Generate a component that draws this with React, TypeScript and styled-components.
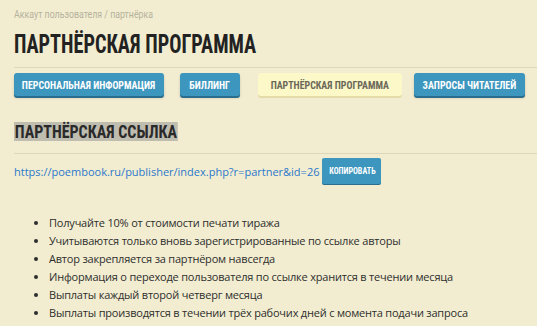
import React from "react";
import styled, { createGlobalStyle } from "styled-components";

const Global = createGlobalStyle`
  html, body { margin: 0; padding: 0; background: #f2edd0; overflow: hidden; }
  body { font-family: "Open Sans", "DejaVu Sans", sans-serif; }
`;

const Cond = `"Roboto Condensed", "Roboto", sans-serif`;

const Page = styled.div`
  width: 537px;
  height: 326px;
  padding: 8px 0 0 14px;
  box-sizing: border-box;
  background: #f2edd0;
`;

const Squeeze = styled.span<{ $k: number; $origin?: string }>`
  display: inline-block;
  white-space: nowrap;
  transform: scaleX(${(p) => p.$k});
  transform-origin: ${(p) => p.$origin || "left center"};
`;

const Breadcrumb = styled.div`
  font-family: "Roboto", sans-serif;
  font-size: 10px;
  line-height: 14px;
  color: #b5b29e;
`;

const Title = styled.h1`
  margin: 8px 0 0;
  font-family: ${Cond};
  font-weight: bold;
  font-size: 25px;
  line-height: 30px;
  color: #222;
`;

const Rule = styled.div<{ $top: number }>`
  margin-top: ${(p) => p.$top}px;
  height: 1px;
  background: #dcd7bb;
`;

const Tabs = styled.div`
  display: flex;
  margin-top: 5px;
`;

const Tab = styled.div<{ $active?: boolean; $w: number; $ml: number }>`
  width: ${(p) => p.$w}px;
  margin-left: ${(p) => p.$ml}px;
  height: 23px;
  box-sizing: border-box;
  display: flex;
  align-items: center;
  justify-content: center;
  border-radius: 3px;
  font-family: ${Cond};
  font-weight: bold;
  font-size: 11.5px;
  white-space: nowrap;
  color: ${(p) => (p.$active ? "#6b685a" : "#fff")};
  background: ${(p) => (p.$active ? "#fcf8c8" : "#3d96be")};
  box-shadow: ${(p) =>
    p.$active ? "0 2px 0 #e3dca8" : "0 2px 0 #2b6d8c, 0 2px 3px rgba(0,0,0,0.15)"};
`;

const SectionTitle = styled.h2`
  margin: 26px 0 0;
  font-family: ${Cond};
  font-weight: bold;
  font-size: 19px;
  line-height: 19px;
  color: #2a2a2a;
`;

const Highlight = styled(Squeeze)`
  background: #bfbdb0;
  padding: 0 1px;
`;

const LinkRow = styled.div`
  display: flex;
  align-items: center;
  margin-top: 4px;
  gap: 3px;
`;

const Link = styled.a`
  font-size: 11px;
  color: #2b78cc;
  text-decoration: none;
`;

const CopyButton = styled.button`
  width: 59px;
  height: 26px;
  padding: 0;
  border: none;
  border-radius: 2px;
  background: #3d96be;
  color: #fff;
  font-family: ${Cond};
  font-weight: bold;
  font-size: 8.5px;
  box-shadow: 0 1px 0 #2b6d8c;
`;

const List = styled.ul`
  margin: 30px 0 0;
  padding: 0 0 0 35px;
  font-size: 11px;
  letter-spacing: -0.2px;
  line-height: 18px;
  color: #2e2e2e;
`;

const Item = styled.li``;

const tabs = [
  { label: "ПЕРСОНАЛЬНАЯ ИНФОРМАЦИЯ", w: 150, ml: 0 },
  { label: "БИЛЛИНГ", w: 60, ml: 16 },
  { label: "ПАРТНЁРСКАЯ ПРОГРАММА", w: 144, ml: 18, active: true },
  { label: "ЗАПРОСЫ ЧИТАТЕЛЕЙ", w: 111, ml: 12 },
];

const items = [
  "Получайте 10% от стоимости печати тиража",
  "Учитываются только вновь зарегистрированные по ссылке авторы",
  "Автор закрепляется за партнёром навсегда",
  "Информация о переходе пользователя по ссылке хранится в течении месяца",
  "Выплаты каждый второй четверг месяца",
  "Выплаты производятся в течении трёх рабочих дней с момента подачи запроса",
];

export default function App() {
  return (
    <Page>
      <Global />
      <Breadcrumb>
        <Squeeze $k={0.88}>Аккаут пользователя / партнёрка</Squeeze>
      </Breadcrumb>
      <Title>
        <Squeeze $k={0.81}>ПАРТНЁРСКАЯ ПРОГРАММА</Squeeze>
      </Title>
      <Rule $top={7} />
      <Tabs>
        {tabs.map((t) => (
          <Tab key={t.label} $w={t.w} $ml={t.ml} $active={t.active}>
            <Squeeze $k={0.86} $origin="center">{t.label}</Squeeze>
          </Tab>
        ))}
      </Tabs>
      <SectionTitle>
        <Highlight $k={0.84}>ПАРТНЁРСКАЯ ССЫЛКА</Highlight>
      </SectionTitle>
      <Rule $top={12} />
      <LinkRow>
        <Link href="#">https://poembook.ru/publisher/index.php?r=partner&amp;id=26</Link>
        <CopyButton>
          <Squeeze $k={0.95} $origin="center">КОПИРОВАТЬ</Squeeze>
        </CopyButton>
      </LinkRow>
      <List>
        {items.map((i) => (
          <Item key={i}>{i}</Item>
        ))}
      </List>
    </Page>
  );
}
